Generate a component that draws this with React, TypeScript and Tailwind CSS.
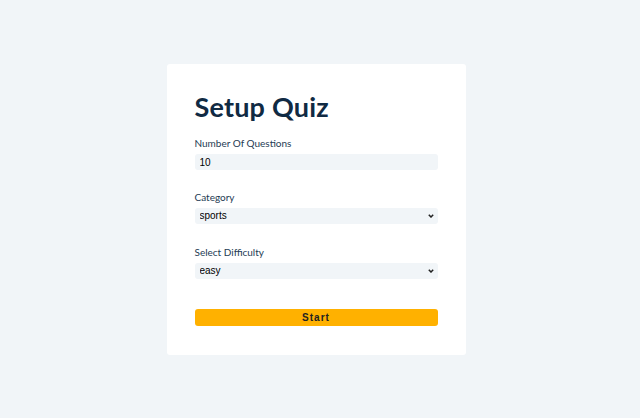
const fieldLabel = 'block text-[10px] leading-none text-[#243b53] mb-[6px]'
const fieldBox =
  'block w-full h-[16px] rounded-[3px] bg-[#f1f5f8] border-0 pl-[5px] text-[10px] leading-none text-black outline-none'
const arial = { fontFamily: 'Arial, "Liberation Sans", sans-serif' }

export default function App() {
  return (
    <div
      className="min-h-[418px] bg-[#f1f5f8] flex justify-center items-start pt-[64px] pr-[8px]"
      style={{ fontFamily: 'Lato, "Noto Sans", sans-serif' }}
    >
      <section className="w-[299px] bg-white rounded-[3px] px-[28px] pt-[29px] pb-[29px]">
        <h2 className="text-[27px] font-bold tracking-[0.2px] text-[#102a43] leading-none mb-[18px]">
          Setup Quiz
        </h2>

        {/* amount */}
        <div className="mb-[22px]">
          <label className={fieldLabel}>Number Of Questions</label>
          <input type="number" defaultValue={10} className={fieldBox} style={arial} />
        </div>

        {/* category */}
        <div className="mb-[23px]">
          <label className={fieldLabel}>Category</label>
          <div className="relative">
            <select defaultValue="sports" className={fieldBox + ' appearance-none'} style={arial}>
              <option value="sports">sports</option>
              <option value="history">history</option>
              <option value="politics">politics</option>
            </select>
            <Chevron />
          </div>
        </div>

        {/* difficulty */}
        <div className="mb-[30px]">
          <label className={fieldLabel}>Select Difficulty</label>
          <div className="relative">
            <select defaultValue="easy" className={fieldBox + ' appearance-none'} style={arial}>
              <option value="easy">easy</option>
              <option value="medium">medium</option>
              <option value="hard">hard</option>
            </select>
            <Chevron />
          </div>
        </div>

        <button
          className="block w-full h-[17px] rounded-[3px] bg-[#ffb100] text-[#222] text-[10px] font-bold tracking-[1px] leading-none"
          style={arial}
        >
          Start
        </button>
      </section>
    </div>
  )
}

function Chevron() {
  return (
    <svg
      className="absolute right-[4px] top-[6px] w-[6px] h-[4px] pointer-events-none"
      viewBox="0 0 6 4"
      fill="none"
      stroke="#222"
      strokeWidth="1.5"
    >
      <path d="M0.8 0.8l2.2 2.2 2.2-2.2" />
    </svg>
  )
}
